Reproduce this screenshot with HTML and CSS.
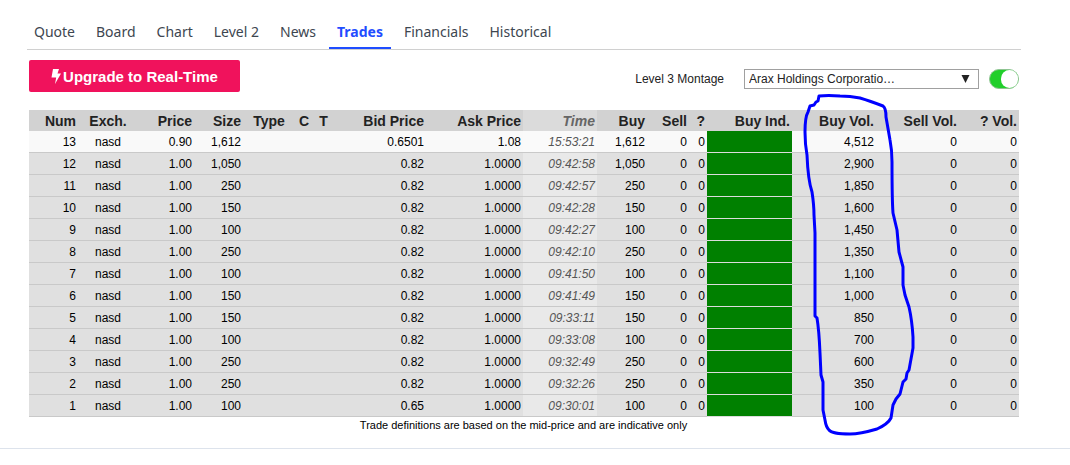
FILE: index.html
```html
<!DOCTYPE html>
<html lang="en">
<head>
<meta charset="utf-8">
<title>Trades</title>
<link rel="stylesheet" href="styles.css">
</head>
<body>
<main class="page">
  <nav class="tabs">
    <a class="tab" href="#quote">Quote</a>
    <a class="tab" href="#board">Board</a>
    <a class="tab" href="#chart">Chart</a>
    <a class="tab" href="#level2">Level 2</a>
    <a class="tab" href="#news">News</a>
    <a class="tab tab-active" href="#trades" aria-current="page">Trades</a>
    <a class="tab" href="#financials">Financials</a>
    <a class="tab" href="#historical">Historical</a>
  </nav>
  <div class="content">
    <div class="toolbar">
      <button class="upgrade" type="button"><svg class="bolt" viewBox="0 0 10 15" aria-hidden="true"><path d="M2 0h6L6.500 4.500H10L4 15l1.200-6.500H.5z"/></svg>Upgrade to Real-Time</button>
      <div class="montage">
        <label class="montage-label" for="montage">Level 3 Montage</label>
        <span class="select-wrap">
          <select class="select" id="montage"><option>Arax Holdings Corporatio…</option></select>
          <svg class="arrow" viewBox="0 0 9 9" aria-hidden="true"><path d="M0 0h9L4.500 9z"/></svg>
        </span>
        <input class="toggle" type="checkbox" aria-label="Live updates" checked>
      </div>
    </div>
    <table class="trades">
      <colgroup>
        <col class="w49"><col class="w60"><col class="w56"><col class="w49"><col class="w52"><col class="w18"><col class="w21"><col class="w92"><col class="w97"><col class="w74"><col class="w50"><col class="w42"><col class="w18"><col class="w85"><col class="w84"><col class="w83"><col class="w60">
      </colgroup>
      <thead>
        <tr><th>Num</th><th class="mid">Exch.</th><th>Price</th><th>Size</th><th class="mid">Type</th><th class="mid">C</th><th class="mid">T</th><th>Bid Price</th><th>Ask Price</th><th class="time">Time</th><th>Buy</th><th>Sell</th><th>?</th><th>Buy Ind.</th><th>Buy Vol.</th><th>Sell Vol.</th><th>? Vol.</th></tr>
      </thead>
      <tbody id="rows"></tbody>
    </table>
    <p class="note">Trade definitions are based on the mid-price and are indicative only</p>
  </div>
  <svg class="pen" viewBox="0 0 120 350" aria-hidden="true"><path d="M19 6L18 11L16 12L14 15L10 16L8 22Q5 27 5 42Q5 54 7 65Q8 90 12 102Q14 115 14 125L15 143V226L17 228Q19 240 20 263L21 285L23 292V320L25 330Q26 337 29 340Q32 344 50 344Q60 344 77 339Q88 334 91 328L93 315L96 309L100 304L103 292L106 289L107 283L109 280L113 258V247Q112 230 109 217L105 205L103 195V177L99 162L97 140L93 123Q92 110 92 72Q92 60 90 50L86 27Q86 18 83 16Q70 11 60 8Q50 6 40 6Q28 5 19 6"/></svg>
</main>
<script src="app.js"></script>
</body>
</html>
```
FILE: styles.css
```css
body {
  margin: 0;
  background: #fff;
  color: #000;
  font-family: "Liberation Sans", Arial, sans-serif;
  font-size: 12px;
}
.page {
  position: relative;
  padding-top: 17px;
  padding-bottom: 15px;
  border-bottom: 1px solid #dde3ec;
}
.tabs {
  display: flex;
  gap: 5px;
  margin: 0 49px 0 27px;
  border-bottom: 1px solid #d0d0d0;
}
.tab {
  height: 30px;
  padding: 0 8px;
  border-bottom: 2px solid transparent;
  color: #3d4650;
  font: 14px/30px "Noto Sans", sans-serif;
  text-decoration: none;
}
.tab:first-child { padding-left: 7px; }
.tab-active {
  border-color: #1f4dff;
  color: #1f4dff;
  font-weight: 700;
}
.content { margin: 10px 51px 0 29px; }
.toolbar {
  display: flex;
  justify-content: space-between;
  align-items: flex-start;
  height: 50px;
}
.upgrade {
  display: flex;
  align-items: center;
  justify-content: center;
  gap: 2px;
  width: 211px;
  height: 32px;
  padding: 0;
  border: 0;
  border-radius: 2px;
  background: #f0125c;
  color: #fff;
  font: 700 15px "Liberation Sans", Arial, sans-serif;
}
.bolt { width: 10px; height: 15px; fill: #fff; }
.montage {
  display: flex;
  align-items: center;
  margin-top: 9px;
}
.montage-label { margin-right: 20px; color: #222; }
.select-wrap { position: relative; width: 235px; height: 20px; }
.select {
  appearance: none;
  width: 100%;
  height: 20px;
  padding: 0 4px;
  border: 1px solid #a0a0a0;
  border-radius: 0;
  background: #fff;
  color: #222;
  font: 12px "Liberation Sans", Arial, sans-serif;
}
.arrow {
  position: absolute;
  top: 6px;
  right: 9px;
  width: 9px;
  height: 8px;
  fill: #222;
  pointer-events: none;
}
.toggle {
  appearance: none;
  display: flex;
  justify-content: flex-end;
  box-sizing: border-box;
  width: 30px;
  height: 20px;
  margin: 0 0 0 10px;
  border: 1px solid #8fc492;
  border-radius: 10px;
  background: #21cf2b;
}
.toggle::before {
  content: "";
  width: 17px;
  height: 18px;
  border-radius: 9px;
  background: #fff;
}
.toggle:not(:checked) { justify-content: flex-start; background: #ccc; }
.trades {
  width: 100%;
  border-collapse: separate;
  border-spacing: 0;
  table-layout: fixed;
}
.w18 { width: 18px; }
.w21 { width: 21px; }
.w42 { width: 42px; }
.w49 { width: 49px; }
.w50 { width: 50px; }
.w52 { width: 52px; }
.w56 { width: 56px; }
.w60 { width: 60px; }
.w74 { width: 74px; }
.w83 { width: 83px; }
.w84 { width: 84px; }
.w85 { width: 85px; }
.w92 { width: 92px; }
.w97 { width: 97px; }
th, td {
  height: 19px;
  padding: 2px 2px 0;
  line-height: 19px;
  text-align: right;
  white-space: nowrap;
}
th {
  background: #d2d2d2;
  color: #222;
  font-size: 14px;
}
td {
  border-bottom: 1px solid #c9c9c9;
  background: #e0e0e0;
}
.mid { text-align: center; }
.latest td { background: #f9f9f9; }
th.time { background: #dbdbdb; color: #666; font-style: italic; }
td.time { background: #e9e9e9; color: #555; font-style: italic; }
.latest td.time { background: #fafafa; }
.trades td.ind { background: #008000; border-color: #dcdcdc; }
.note {
  margin: 0;
  padding-right: 1px;
  font-size: 11px;
  line-height: 16px;
  text-align: center;
}
.pen {
  position: absolute;
  top: 90px;
  left: 800px;
  width: 120px;
  height: 350px;
  overflow: visible;
  fill: none;
  stroke: #00f;
  stroke-width: 3;
  stroke-linecap: round;
  stroke-linejoin: round;
  pointer-events: none;
}
```
FILE: app.js
```js
// num, price, size, bid, ask, time, cumulative buy volume
const trades = [
  [13, "0.90", "1,612", "0.6501", "1.08", "15:53:21", "4,512"],
  [12, "1.00", "1,050", "0.82", "1.0000", "09:42:58", "2,900"],
  [11, "1.00", "250", "0.82", "1.0000", "09:42:57", "1,850"],
  [10, "1.00", "150", "0.82", "1.0000", "09:42:28", "1,600"],
  [9, "1.00", "100", "0.82", "1.0000", "09:42:27", "1,450"],
  [8, "1.00", "250", "0.82", "1.0000", "09:42:10", "1,350"],
  [7, "1.00", "100", "0.82", "1.0000", "09:41:50", "1,100"],
  [6, "1.00", "150", "0.82", "1.0000", "09:41:49", "1,000"],
  [5, "1.00", "150", "0.82", "1.0000", "09:33:11", "850"],
  [4, "1.00", "100", "0.82", "1.0000", "09:33:08", "700"],
  [3, "1.00", "250", "0.82", "1.0000", "09:32:49", "600"],
  [2, "1.00", "250", "0.82", "1.0000", "09:32:26", "350"],
  [1, "1.00", "100", "0.65", "1.0000", "09:30:01", "100"]
];
document.getElementById("rows").innerHTML = trades.map(([num, price, size, bid, ask, time, vol], i) =>
  `<tr${i === 0 ? ' class="latest"' : ""}><td>${num}</td><td class="mid">nasd</td><td>${price}</td><td>${size}</td><td></td><td></td><td></td><td>${bid}</td><td>${ask}</td><td class="time">${time}</td><td>${size}</td><td>0</td><td>0</td><td class="ind"></td><td>${vol}</td><td>0</td><td>0</td></tr>`
).join("");
```
